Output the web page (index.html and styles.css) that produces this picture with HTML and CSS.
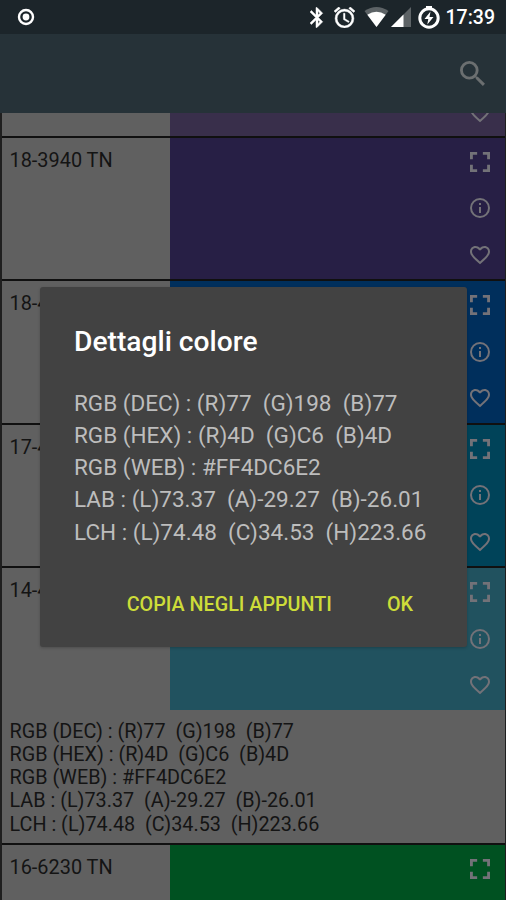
FILE: index.html
```html
<!DOCTYPE html>
<html lang="it">
<head>
<meta charset="utf-8">
<title>Dettagli colore</title>
<link rel="stylesheet" href="styles.css">
</head>
<body>
<svg class="defs" aria-hidden="true">
  <symbol id="full" viewBox="5 5 14 14"><path d="M7 14H5v5h5v-2H7zM5 10h2V7h3V5H5zm12 7h-3v2h5v-5h-2zM14 5v2h3v3h2V5z"/></symbol>
  <symbol id="info" viewBox="0 0 24 24"><path d="M11 7h2v2h-2zm0 4h2v6h-2zm1-9a10 10 0 1 0 0 20 10 10 0 0 0 0-20zm0 18a8 8 0 1 1 0-16 8 8 0 0 1 0 16z"/></symbol>
  <symbol id="heart" viewBox="0 0 24 24"><path d="M16.5 3c-1.74 0-3.41.81-4.5 2.09C10.91 3.81 9.24 3 7.5 3 4.42 3 2 5.42 2 8.5c0 3.78 3.4 6.86 8.55 11.54L12 21.35l1.45-1.32C18.6 15.36 22 12.28 22 8.5 22 5.42 19.58 3 16.5 3zm-4.4 15.55l-.1.1-.1-.1C7.14 14.24 4 11.39 4 8.5 4 6.5 5.5 5 7.5 5c1.54 0 3.04.99 3.57 2.36h1.87C13.46 5.99 14.96 5 16.5 5c2 0 3.5 1.5 3.5 3.5 0 2.89-3.14 5.74-7.9 10.05z"/></symbol>
</svg>
<div class="screen">
  <header class="status">
    <svg class="rec" viewBox="0 0 18 18"><circle cx="9" cy="9" r="7" fill="none" stroke="#fff" stroke-width="2.4"/><circle cx="9" cy="9" r="3.4"/></svg>
    <div class="tray">
      <svg class="bt" viewBox="5 2 14 20"><path d="M17.71 7.71L12 2h-1v7.59L6.41 5 5 6.41 10.59 12 5 17.59 6.41 19 11 14.41V22h1l5.71-5.71-4.3-4.29zM13 5.83l1.88 1.88L13 9.59zm1.88 10.46L13 18.17v-3.76z" stroke="#fff" stroke-width=".5"/></svg>
      <svg class="alarm" viewBox="2 2 20 20"><path d="M22 5.72l-4.6-3.86-1.29 1.53 4.6 3.86zM7.88 3.39L6.6 1.86 2 5.71l1.29 1.53zM12.5 8H11v6l4.75 2.85.75-1.23-4-2.37zM12 4a9 9 0 1 0 0 18 9 9 0 0 0 0-18zm0 16a7 7 0 1 1 0-14 7 7 0 0 1 0 14z" stroke="#fff" stroke-width=".4"/></svg>
      <svg class="wifi" viewBox="0 0 24 20"><path class="faint" d="M0 4Q12-4 24 4L12 20z"/><path d="M2.8 7.8Q12 1.8 21.2 7.8L12 20z"/></svg>
      <svg class="cell" viewBox="0 0 20 20"><path class="faint" d="M20 0v20H0z"/><path d="M12.5 7.5V20H0z"/></svg>
      <svg class="batt" viewBox="0 0 22 23"><path d="M8 0h6v3H8z"/><circle cx="11" cy="12" r="9.2" fill="none" stroke="#fff" stroke-width="3"/><path d="M12.5 5.5L6.5 13h3.8l-1 5.5L15.5 11h-4z"/></svg>
      <span class="clock">17:39</span>
    </div>
  </header>
  <div class="appbar">
    <svg class="search" viewBox="3 3 17.5 17.5"><path d="M15.5 14h-.79l-.28-.27A6.47 6.47 0 0 0 16 9.5 6.5 6.5 0 1 0 9.5 16c1.61 0 3.09-.59 4.23-1.57l.27.28v.79l5 4.99L20.49 19zm-6 0a4.5 4.5 0 1 1 0-9 4.5 4.5 0 0 1 0 9z"/></svg>
  </div>
  <main class="list">
    <section class="row partial"><div class="swatch lilac"><svg class="ic"><use href="#heart"/></svg></div></section>
    <section class="row"><div class="name">18-3940 TN</div><div class="swatch violet"><svg class="ic fs"><use href="#full"/></svg><svg class="ic"><use href="#info"/></svg><svg class="ic"><use href="#heart"/></svg></div></section>
    <section class="row"><div class="name">18-4</div><div class="swatch blue"><svg class="ic fs"><use href="#full"/></svg><svg class="ic"><use href="#info"/></svg><svg class="ic"><use href="#heart"/></svg></div></section>
    <section class="row"><div class="name">17-4</div><div class="swatch teal"><svg class="ic fs"><use href="#full"/></svg><svg class="ic"><use href="#info"/></svg><svg class="ic"><use href="#heart"/></svg></div></section>
    <section class="row open"><div class="name">14-4</div><div class="swatch cyan"><svg class="ic fs"><use href="#full"/></svg><svg class="ic"><use href="#info"/></svg><svg class="ic"><use href="#heart"/></svg></div>
      <div class="details">RGB (DEC) : (R)77  (G)198  (B)77
RGB (HEX) : (R)4D  (G)C6  (B)4D
RGB (WEB) : #FF4DC6E2
LAB : (L)73.37  (A)-29.27  (B)-26.01
LCH : (L)74.48  (C)34.53  (H)223.66</div></section>
    <section class="row"><div class="name">16-6230 TN</div><div class="swatch green"><svg class="ic fs"><use href="#full"/></svg></div></section>
  </main>
  <div class="dialog" role="dialog">
    <h1>Dettagli colore</h1>
    <div class="values">RGB (DEC) : (R)77  (G)198  (B)77
RGB (HEX) : (R)4D  (G)C6  (B)4D
RGB (WEB) : #FF4DC6E2
LAB : (L)73.37  (A)-29.27  (B)-26.01
LCH : (L)74.48  (C)34.53  (H)223.66</div>
    <div class="actions"><span>COPIA NEGLI APPUNTI</span><span>OK</span></div>
  </div>
</div>
</body>
</html>
```
FILE: styles.css
```css
* { box-sizing: border-box; }
body { margin: 0; font-family: Roboto, "Liberation Sans", sans-serif; }
.defs { position: absolute; width: 0; height: 0; }
svg { display: block; flex: none; }
.screen { position: relative; width: 506px; height: 900px; overflow: hidden; display: flex; flex-direction: column; background: #1f1f1f; }

.status { flex: none; height: 34px; padding: 0 11px 0 17px; background: #1c252a; color: #fff; fill: #fff; display: flex; align-items: center; justify-content: space-between; }
.rec { width: 18px; height: 18px; }
.tray { display: flex; align-items: center; }
.bt { width: 14px; height: 21px; margin-right: 10px; }
.alarm { width: 21px; height: 21px; margin-right: 9px; }
.wifi { width: 25px; height: 20px; margin-right: 2px; }
.cell { width: 20px; height: 20px; margin-right: 7px; }
.batt { width: 22px; height: 23px; margin-right: 6px; }
.faint { fill: #5d6366; }
.clock { font-size: 19.5px; font-weight: 500; line-height: 34px; padding-top: 2px; }

.appbar { flex: none; height: 78.5px; padding-right: 21px; background: #263238; display: flex; align-items: center; justify-content: flex-end; }
.search { width: 25px; height: 25px; fill: #6b6f70; }

.list { flex: none; padding: 0 1.5px 0 2px; }
.row { display: grid; grid-template-columns: 168px 1fr; grid-template-rows: 141.5px; height: 143.5px; border-bottom: 2px solid #101010; background: #606060; }
.partial { height: 25px; grid-template-rows: 23px; overflow: hidden; }
.open { height: 277px; grid-template-rows: 141.5px 133.5px; }
.name { padding: 11px 0 0 7.5px; font-size: 19.9px; line-height: 23.3px; color: #141414; white-space: nowrap; }
.swatch { grid-column: 2; display: flex; flex-direction: column; align-items: flex-end; gap: 22.7px; padding: 12px 12.5px 0 0; fill: #737278; }
.partial .swatch { padding-top: 0; }
.partial .ic { margin-top: -12px; }
.ic { width: 24px; height: 24px; }
.fs { width: 20px; height: 20px; margin: 2px; }
.lilac { background: #392f4b; }
.violet { background: #271f45; }
.blue { background: #002f5c; }
.teal { background: #004359; }
.cyan { background: #21525f; }
.green { background: #005121; }
.details { grid-column: 1 / -1; padding: 10px 0 0 7.5px; font-size: 19.8px; line-height: 23.3px; color: #141414; white-space: pre; }

.dialog { position: absolute; left: 40px; top: 287px; width: 427px; height: 360px; padding: 37px 34px 0; border-radius: 3px; background: #424242; box-shadow: 0 1px 3px rgba(0, 0, 0, .2); }
h1 { margin: 0; font-size: 28.2px; font-weight: 500; line-height: 36px; color: #fff; white-space: nowrap; }
.values { margin-top: 26.5px; font-size: 22.5px; line-height: 32.3px; color: #bdbdbd; white-space: pre; }
.actions { margin-top: 41px; padding-right: 20px; display: flex; justify-content: flex-end; gap: 55px; font-size: 19.75px; font-weight: 500; line-height: 32px; color: #cddc39; white-space: nowrap; }
```
